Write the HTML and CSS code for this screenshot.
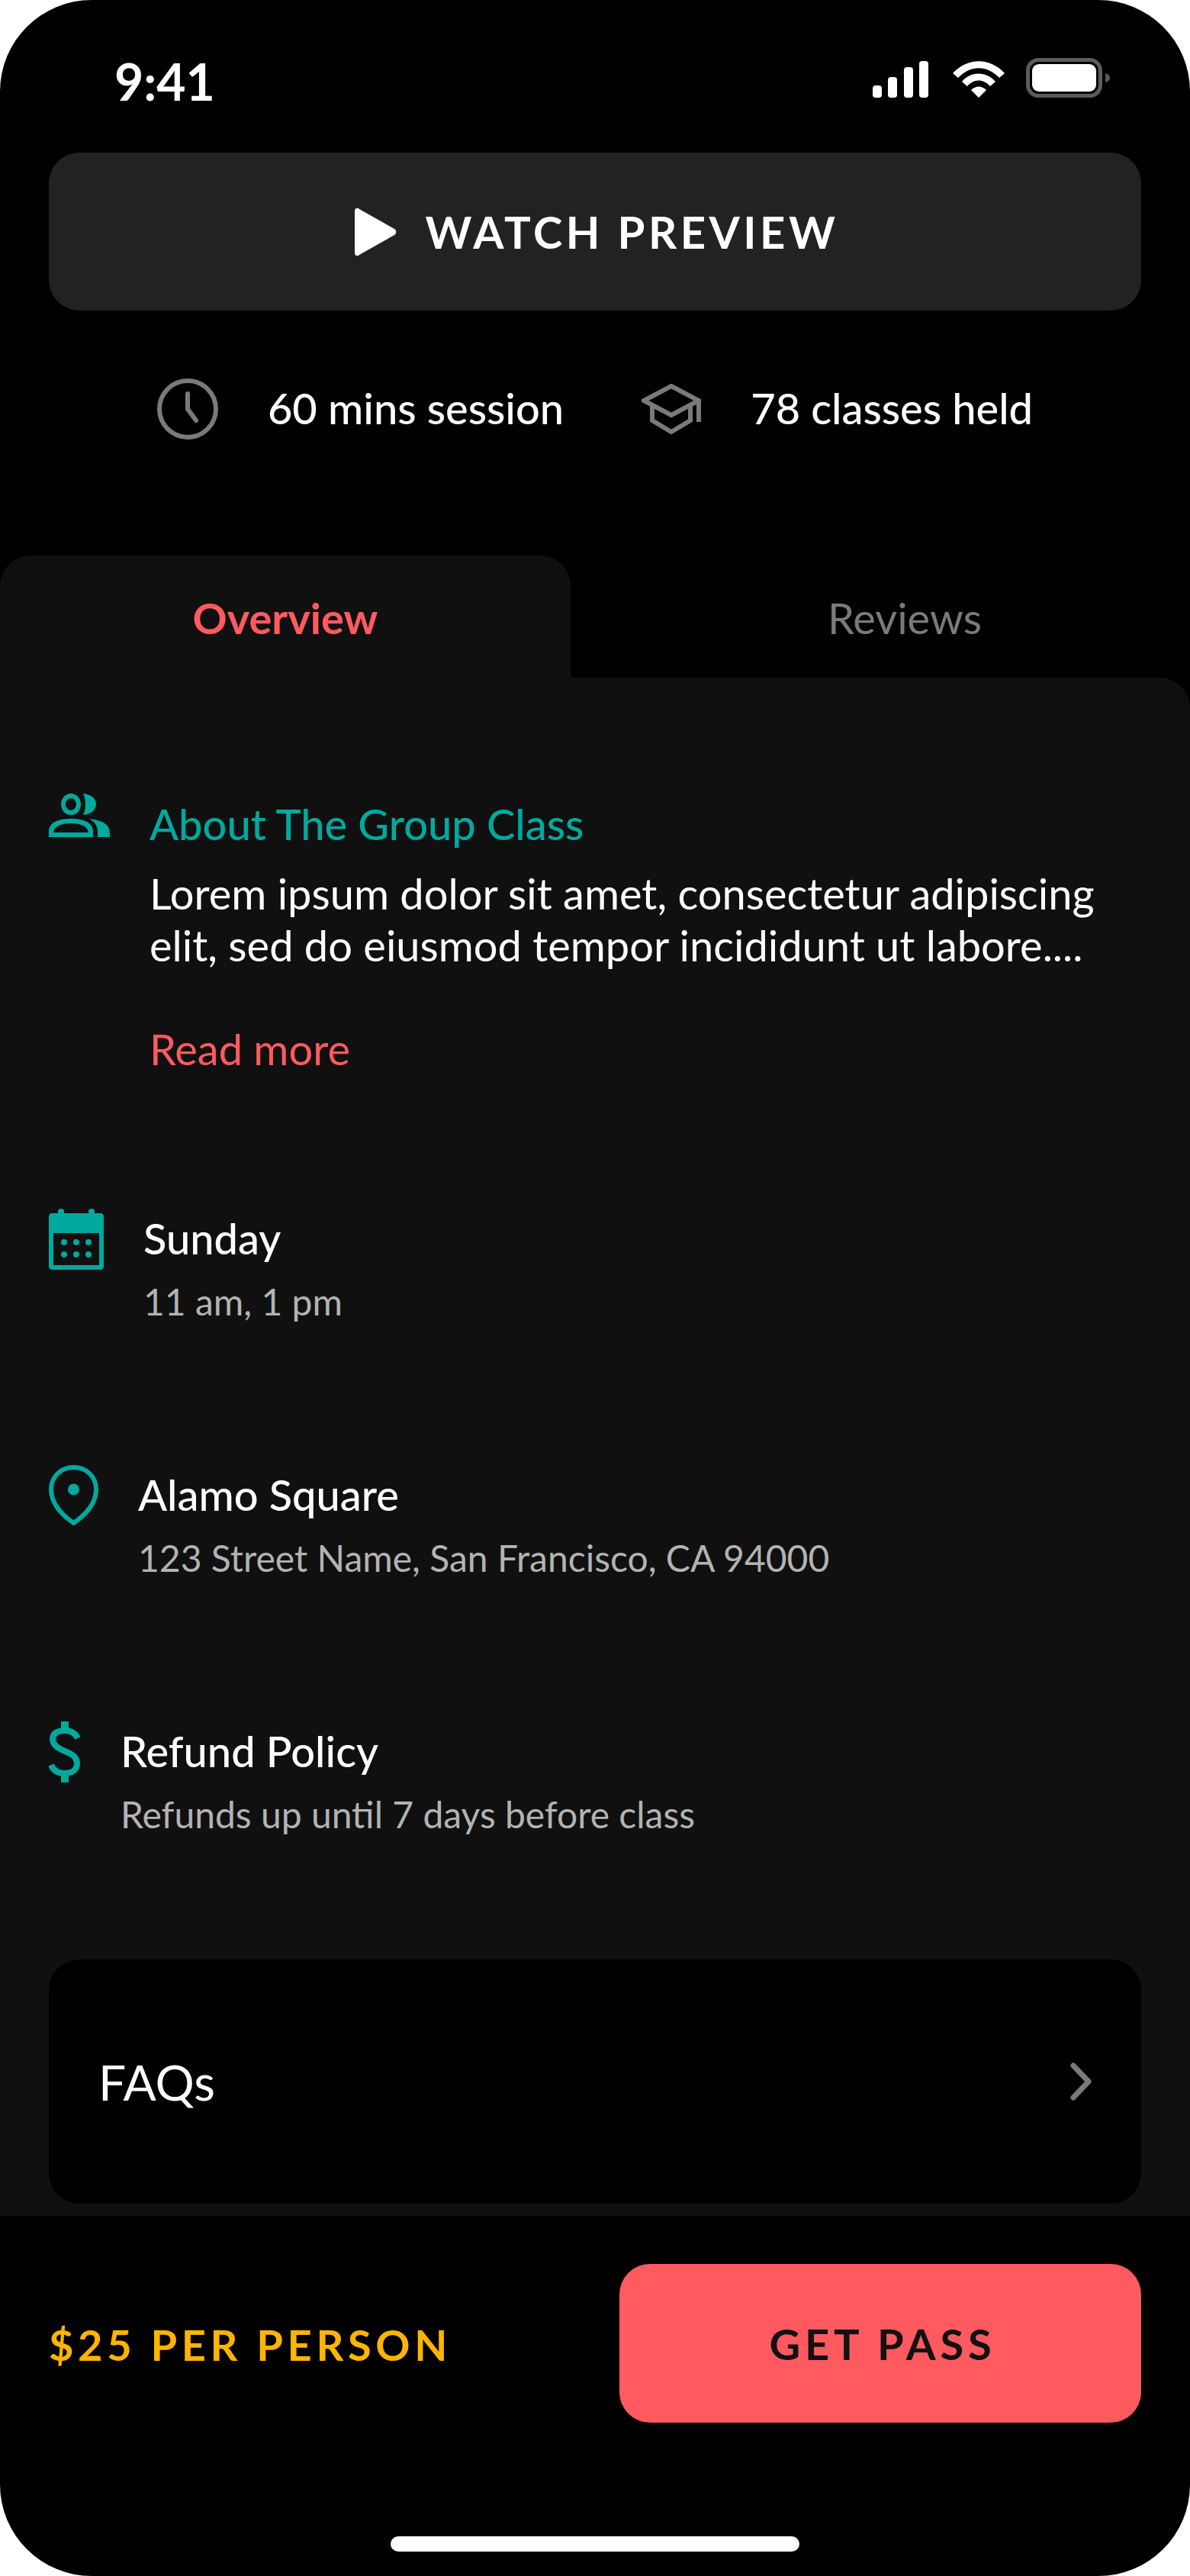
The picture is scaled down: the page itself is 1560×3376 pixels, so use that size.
FILE: index.html
```html
<!DOCTYPE html>
<html lang="en">
<head>
    <meta charset="UTF-8">
    <title>Group class</title>
    <link rel="stylesheet" href="styles.css">
</head>
<body>
<div class="phone">
    <div class="status">
        <span class="time">9:41</span>
        <div class="status-icons">
            <svg class="signal" width="74" height="48" viewBox="0 0 74 48" fill="#fff">
                <rect x="0" y="32" width="12" height="16" rx="4"/>
                <rect x="20" y="21" width="12" height="27" rx="4"/>
                <rect x="41" y="8" width="12" height="40" rx="4"/>
                <rect x="61" y="0" width="12" height="48" rx="4"/>
            </svg>
            <svg width="68" height="48" viewBox="0 0 68 48" fill="#fff">
                <path d="M0 16 C19 -5 49 -5 68 16 L61 22 C45 5 23 5 7 22 Z"/>
                <path d="M12 27 C24 13 44 13 56 27 L49 33 C40 23 28 23 19 33 Z"/>
                <path d="M24 38 C30 32 38 32 44 38 L34 48 Z"/>
            </svg>
            <svg width="110" height="52" viewBox="0 0 110 52">
                <rect x="2.5" y="2.5" width="95" height="47" rx="14" fill="none" stroke="#5c5c5c" stroke-width="5"/>
                <rect x="8" y="8" width="84" height="36" rx="9" fill="#fff"/>
                <path d="M104 20 C108 21 110 23 110 26 C110 29 108 31 104 32 Z" fill="#5c5c5c"/>
            </svg>
        </div>
    </div>

    <button class="preview-btn">
        <svg width="55" height="64" viewBox="0 0 56 64" fill="#fff">
            <path d="M0 4 C0 0 4 -1 7 2 L53 28 C56 30 56 34 53 36 L7 62 C4 65 0 64 0 60 Z"/>
        </svg>
        <span>WATCH PREVIEW</span>
    </button>

    <div class="stats">
        <div class="stat">
            <svg width="80" height="80" viewBox="0 0 80 80" fill="none" stroke="#7a7a7a" stroke-width="6" stroke-linecap="round">
                <circle cx="40" cy="40" r="37"/>
                <path d="M40 20 V40 L51 55"/>
            </svg>
            <span>60 mins session</span>
        </div>
        <div class="stat">
            <svg width="78" height="66" viewBox="0 0 78 66" fill="none" stroke="#7a7a7a" stroke-width="6">
                <path d="M39 3 L75 22 L39 41 L3 22 Z"/>
                <path d="M14 30 V48 L39 63 L64 48 V30"/>
                <path d="M75 22 V50"/>
            </svg>
            <span>78 classes held</span>
        </div>
    </div>

    <div class="tabs">
        <div class="tab active">Overview</div>
        <div class="tab">Reviews</div>
    </div>

    <div class="panel">
        <div class="about">
            <svg class="ico" width="80" height="57" viewBox="0 0 80 57" fill="#00a99d">
                <path d="M29 0 C37 0 42 7 42 14 C42 21 37 28 29 28 C21 28 16 21 16 14 C16 7 21 0 29 0 Z M29 6 C25 6 22 10 22 14 C22 18 25 22 29 22 C33 22 36 18 36 14 C36 10 33 6 29 6 Z" fill-rule="evenodd"/>
                <path d="M45 0 C56 1 62 7 62 14 C62 21 56 27 45 28 C49 20 49 8 45 0 Z"/>
                <path d="M0 50 C0 38 12 33 29 33 C46 33 58 38 58 50 V57 H0 Z M6 51 H52 C51 43 42 39 29 39 C16 39 7 43 6 51 Z" fill-rule="evenodd"/>
                <path d="M53 33 C70 35 80 40 80 52 V57 H64 V50 C64 42 60 37 53 33 Z"/>
            </svg>
            <div class="about-text">
                <div class="about-title">About The Group Class</div>
                <p class="about-desc">Lorem ipsum dolor sit amet, consectetur adipiscing<br>elit, sed do eiusmod tempor incididunt ut labore....</p>
                <a class="read-more">Read more</a>
            </div>
        </div>

        <div class="info">
            <svg class="ico" width="72" height="80" viewBox="0 0 72 80" fill="#00a99d">
                <path d="M12 6 V3 C12 -1 20 -1 20 3 V6 H52 V3 C52 -1 60 -1 60 3 V6 H68 C70 6 72 8 72 10 V76 C72 78 70 80 68 80 H4 C2 80 0 78 0 76 V10 C0 8 2 6 4 6 Z M6 32 V74 H66 V32 Z" fill-rule="evenodd"/>
                <ellipse cx="20" cy="44" rx="4" ry="4"/><ellipse cx="36" cy="44" rx="4" ry="4"/><ellipse cx="52" cy="44" rx="4" ry="4"/>
                <ellipse cx="20" cy="60" rx="4" ry="4"/><ellipse cx="36" cy="60" rx="4" ry="4"/><ellipse cx="52" cy="60" rx="4" ry="4"/>
            </svg>
            <div>
                <div class="info-title">Sunday</div>
                <div class="info-sub">11 am, 1 pm</div>
            </div>
        </div>

        <div class="info">
            <svg class="ico" width="65" height="80" viewBox="0 0 65 80">
                <path d="M32.5 76 C18 66 3 52 3 32 C3 15 16 3 32.5 3 C49 3 62 15 62 32 C62 52 47 66 32.5 76 Z" fill="none" stroke="#00a99d" stroke-width="6" stroke-linejoin="round"/>
                <circle cx="32.5" cy="32" r="7.5" fill="#00a99d"/>
            </svg>
            <div>
                <div class="info-title">Alamo Square</div>
                <div class="info-sub">123 Street Name, San Francisco, CA 94000</div>
            </div>
        </div>

        <div class="info info-last">
            <svg class="ico" width="42" height="80" viewBox="0 0 42 80" fill="none" stroke="#00a99d" stroke-width="8">
                <path d="M38 22 C34 14 28 12 21 12 C11 12 5 16 5 23 C5 31 12 35 21 39 C31 43 37 47 37 55 C37 63 31 68 21 68 C13 68 6 65 3 57"/>
                <path d="M21 0 V12 M21 68 V80" stroke-width="10"/>
            </svg>
            <div>
                <div class="info-title">Refund Policy</div>
                <div class="info-sub">Refunds up until 7 days before class</div>
            </div>
        </div>

        <div class="faq">
            <span>FAQs</span>
            <svg width="28" height="50" viewBox="0 0 28 50" fill="none" stroke="#7a7a7a" stroke-width="7" stroke-linecap="round" stroke-linejoin="round">
                <path d="M4 4 L24 25 L4 46"/>
            </svg>
        </div>
    </div>

    <div class="footer">
        <span class="price">$25 PER PERSON</span>
        <button class="pass-btn">GET PASS</button>
    </div>
    <div class="home-bar"></div>
</div>
</body>
</html>
```

FILE: styles.css
```css
* {
    box-sizing: border-box;
}

body {
    margin: 0;
    background: #fff;
    font-family: "Lato", "Liberation Sans", sans-serif;
    color: #fff;
}

.phone {
    width: 1560px;
    height: 3376px;
    background: #000;
    border-radius: 120px;
    overflow: hidden;
}

.status {
    height: 200px;
    padding: 76px 105px 0 150px;
    display: flex;
    justify-content: space-between;
    align-items: flex-start;
}

.time {
    font-size: 66px;
    font-weight: 700;
    line-height: 62px;
}

.status-icons {
    display: flex;
    align-items: flex-end;
    gap: 28px;
    height: 52px;
}

.signal {
    margin-right: 3px;
}

.preview-btn {
    display: flex;
    align-items: center;
    justify-content: center;
    gap: 38px;
    width: 1432px;
    height: 207px;
    margin: 0 64px;
    padding: 0 0 0 4px;
    border: 0;
    border-radius: 40px;
    background: #222;
    color: #fff;
    font-family: inherit;
    font-size: 58px;
    font-weight: 700;
    letter-spacing: 4.5px;
}

.stats {
    display: flex;
    justify-content: center;
    gap: 102px;
    height: 80px;
    margin-top: 89px;
}

.stat {
    display: flex;
    align-items: center;
    gap: 65px;
    font-size: 56px;
    font-weight: 500;
}

.stat span {
    margin-top: -4px;
}

.tabs {
    display: flex;
    height: 160px;
    margin-top: 152px;
    font-size: 56px;
}

.tab {
    flex: 1;
    padding: 50px 0 0 64px;
    text-align: center;
    line-height: 64px;
    color: #7a7a7a;
}

.tab.active {
    flex: none;
    width: 748px;
    padding-left: 0;
    background: #101010;
    border-radius: 40px 40px 0 0;
    color: #ff5a5f;
    font-weight: 700;
}

.panel {
    height: 2016px;
    padding: 152px 64px 0;
    background: #101010;
    border-radius: 0 40px 0 0;
}

.about,
.info {
    display: flex;
    align-items: flex-start;
    gap: 52px;
}

.ico {
    flex: none;
}

.about-title {
    font-size: 56px;
    font-weight: 500;
    line-height: 80px;
    color: #00a99d;
}

.about-desc {
    margin: 17px 0 0;
    font-size: 56px;
    line-height: 68px;
}

.read-more {
    display: block;
    margin-top: 68px;
    font-size: 56px;
    line-height: 68px;
    color: #ff5a5f;
}

.info {
    height: 164px;
    margin-bottom: 172px;
}

.about {
    margin-bottom: 175px;
}

.info-title {
    font-size: 56px;
    font-weight: 500;
    line-height: 78px;
}

.info-sub {
    font-size: 48px;
    line-height: 88px;
    color: #b3b3b3;
}

.info-last {
    margin-bottom: 148px;
}

.faq {
    display: flex;
    align-items: center;
    justify-content: space-between;
    height: 320px;
    padding: 0 65px;
    background: #000;
    border-radius: 40px;
    font-size: 64px;
}

.footer {
    display: flex;
    align-items: center;
    justify-content: space-between;
    height: 208px;
    margin-top: 63px;
    padding: 0 64px;
}

.price {
    margin-top: 2px;
    font-size: 56px;
    font-weight: 700;
    letter-spacing: 5.6px;
    color: #ffb400;
}

.pass-btn {
    width: 684px;
    height: 208px;
    padding: 0 0 0 6px;
    border: 0;
    border-radius: 40px;
    background: #ff5a5f;
    color: #111;
    font-family: inherit;
    font-size: 56px;
    font-weight: 700;
    letter-spacing: 5.8px;
}

.home-bar {
    width: 536px;
    height: 20px;
    margin: 149px auto 0;
    background: #fff;
    border-radius: 10px;
}
```
